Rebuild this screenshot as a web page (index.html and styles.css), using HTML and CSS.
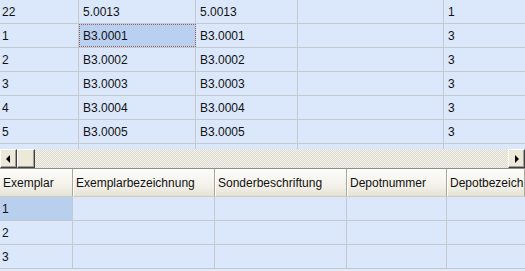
FILE: index.html
```html
<!DOCTYPE html>
<html>
<head>
    <title>Exemplare</title>
    <link rel="stylesheet" href="styles.css">
</head>
<body>
    <div class="grid top-grid">
        <div class="row first"><div class="cell c1">22</div><div class="cell c2">5.0013</div><div class="cell c3">5.0013</div><div class="cell c4"></div><div class="cell c5">1</div></div>
        <div class="row"><div class="cell c1">1</div><div class="cell c2 focus">B3.0001</div><div class="cell c3">B3.0001</div><div class="cell c4"></div><div class="cell c5">3</div></div>
        <div class="row"><div class="cell c1">2</div><div class="cell c2">B3.0002</div><div class="cell c3">B3.0002</div><div class="cell c4"></div><div class="cell c5">3</div></div>
        <div class="row"><div class="cell c1">3</div><div class="cell c2">B3.0003</div><div class="cell c3">B3.0003</div><div class="cell c4"></div><div class="cell c5">3</div></div>
        <div class="row"><div class="cell c1">4</div><div class="cell c2">B3.0004</div><div class="cell c3">B3.0004</div><div class="cell c4"></div><div class="cell c5">3</div></div>
        <div class="row"><div class="cell c1">5</div><div class="cell c2">B3.0005</div><div class="cell c3">B3.0005</div><div class="cell c4"></div><div class="cell c5">3</div></div>
        <div class="row"><div class="cell c1"></div><div class="cell c2"></div><div class="cell c3"></div><div class="cell c4"></div><div class="cell c5"></div></div>
    </div>

    <div class="hscroll">
        <div class="sbtn"><span class="arrow left"></span></div>
        <div class="sbtn thumb"></div>
        <div class="track"></div>
        <div class="sbtn"><span class="arrow right"></span></div>
    </div>

    <div class="grid bottom-grid">
        <div class="row head"><div class="cell b1">Exemplar</div><div class="cell b2">Exemplarbezeichnung</div><div class="cell b3">Sonderbeschriftung</div><div class="cell b4">Depotnummer</div><div class="cell b5">Depotbezeichnung</div></div>
        <div class="row"><div class="cell b1 sel">1</div><div class="cell b2"></div><div class="cell b3"></div><div class="cell b4"></div><div class="cell b5"></div></div>
        <div class="row"><div class="cell b1">2</div><div class="cell b2"></div><div class="cell b3"></div><div class="cell b4"></div><div class="cell b5"></div></div>
        <div class="row"><div class="cell b1">3</div><div class="cell b2"></div><div class="cell b3"></div><div class="cell b4"></div><div class="cell b5"></div></div>
    </div>
</body>
</html>
```

FILE: styles.css
```css
body { margin: 0; width: 525px; height: 271px; overflow: hidden; background: #e6eef9;
       font-family: "Liberation Sans", Arial, sans-serif; font-size: 12px; color: #111; }

.grid { background: #dbe8fb; overflow: hidden; }
.top-grid { height: 149px; }
.row { display: flex; height: 23px; border-bottom: 1px solid #c4c8cf; }
.row.first { height: 23px; }
.cell { height: 100%; box-sizing: border-box; padding: 1px 4px 0; line-height: 22px;
        border-right: 1px solid #c4c8cf; white-space: nowrap; overflow: hidden; flex: none; }
.cell:last-child { border-right: none; flex: 1; }

.c1 { width: 79px; padding-left: 2px; }
.c2 { width: 117px; }
.c3 { width: 102px; }
.c4 { width: 146px; }
.c5 { width: 82px; }

.focus { background: #b9d0f0; outline: 1px dotted #9a5f5f; outline-offset: -1px; }

.hscroll { display: flex; height: 19px; border-bottom: 1px solid #8e8e8e;
           background: repeating-conic-gradient(#f4f2ec 0 25%, #dcd9cf 0 50%) 0 0 / 2px 2px; }
.sbtn { width: 17px; height: 19px; box-sizing: border-box; background: #ece9d8;
        border-top: 1px solid #fff; border-left: 1px solid #fff;
        border-right: 1px solid #404040; border-bottom: 1px solid #404040;
        box-shadow: inset -1px -1px 0 #a09f97; display: flex; align-items: center; justify-content: center; }
.thumb { width: 18px; }
.track { flex: 1; }
.arrow { width: 0; height: 0; border-top: 4px solid transparent; border-bottom: 4px solid transparent; }
.arrow.left { border-right: 4px solid #000; margin-right: 1px; }
.arrow.right { border-left: 4px solid #000; margin-left: 1px; }

.bottom-grid { height: 101px; }
.head { height: 27px; background: linear-gradient(#fdfdfb, #f1efe6 70%, #e4e1d4);
        border-bottom: 1px solid #cfcbbd; }
.head .cell { line-height: 26px; padding-top: 1px; padding-left: 3px; border-right: 1px solid #aca899;
              box-shadow: 1px 0 0 #fff; }
.b1 { width: 73px; padding-left: 2px; }
.b2 { width: 142px; }
.b3 { width: 132px; }
.b4 { width: 100px; }
.b5 { width: 78px; }
.sel { background: #b9cfee; }
```
